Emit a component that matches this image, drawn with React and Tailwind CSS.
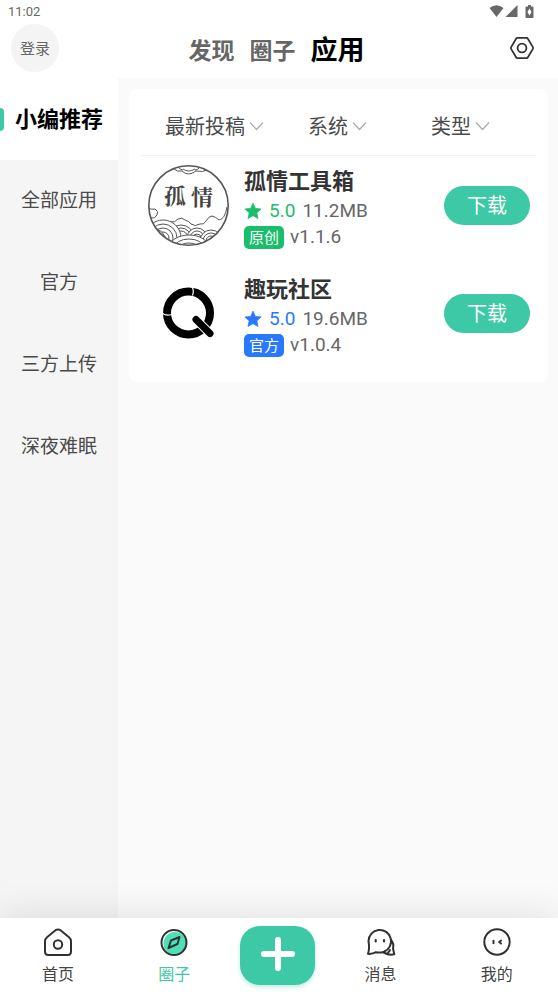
import React from "react";

const categories = ["小编推荐", "全部应用", "官方", "三方上传", "深夜难眠"];

const filters = [
  { label: "最新投稿", options: ["最新投稿", "最多下载"] },
  { label: "系统", options: ["系统", "安卓"] },
  { label: "类型", options: ["类型", "工具"] },
];

function StatusBar() {
  return (
    <div className="flex h-6 items-center justify-between pr-6 pl-2 text-[#686868]">
      <span className="font-['Roboto',sans-serif] text-[13px] leading-5">11:02</span>
      <div className="flex items-center gap-px pb-0.5" aria-hidden="true">
        <svg width="15" height="12" viewBox="0 0 15 12" fill="currentColor">
          <path d="M0.500 3Q7.500 -2.500 14.500 3L7.500 12Z" />
        </svg>
        <svg width="13" height="12" viewBox="0 0 13 12" fill="currentColor">
          <path d="M12.500 0V12H0.500Z" />
        </svg>
        <svg className="ml-1.5" width="9" height="13" viewBox="0 0 9 13">
          <path fill="currentColor" d="M3 0h3v1.500h1.500q1 0 1 1V12q0 1-1 1h-6q-1 0-1-1V2.500q0-1 1-1H3Z" />
          <path fill="#fff" d="M4.500 3.500L6.500 7 4.500 10.500 2.500 7Z" />
        </svg>
      </div>
    </div>
  );
}

function Header() {
  return (
    <header className="grid h-[54px] grid-cols-[1fr_auto_1fr] items-start pr-4 pl-[11px]">
      <button className="size-12 rounded-full bg-[#f4f4f4] text-[15px] leading-5 text-[#666]">登录</button>
      <nav className="flex h-[50px] items-center gap-[15px] font-bold">
        <a href="#discover" className="text-[23px] leading-8 text-[#666]">发现</a>
        <a href="#circle" className="text-[23px] leading-8 text-[#666]">圈子</a>
        <a href="#apps" aria-current="page" className="text-[27px] leading-8 text-black">应用</a>
      </nav>
      <button aria-label="设置" className="flex h-12 items-center justify-self-end px-[7px]">
        <svg width="26" height="24" viewBox="0 0 26 24" fill="none" stroke="#333" strokeWidth="1.800" strokeLinejoin="round">
          <path d="M8.600 1.900h8.800q1 0 1.500.9l5 8.300q.500.900 0 1.800l-5 8.300q-.500.900-1.500.9H8.600q-1 0-1.500-.9l-5-8.300q-.500-.900 0-1.800l5-8.300q.500-.900 1.500-.9Z" />
          <circle cx="13" cy="12" r="4.400" />
        </svg>
      </button>
    </header>
  );
}

function Sidebar() {
  return (
    <aside className="w-[118px] shrink-0 bg-[#f5f5f5]">
      {categories.map((name, i) =>
        i === 0 ? (
          <button key={name} className="flex h-[82px] w-full items-center bg-white pr-1 text-[22px] font-bold text-black">
            <span className="h-[23px] w-1 rounded-r bg-[#3dc9a5]" />
            <span className="flex-1 pb-1 text-center leading-8">{name}</span>
          </button>
        ) : (
          <button key={name} className="block h-[82px] w-full pb-1 text-center text-[19px] leading-7 text-[#4a4a4a]">
            {name}
          </button>
        )
      )}
    </aside>
  );
}

function Filter({ label, options }) {
  return (
    <div className="flex items-center justify-center gap-1">
      <select
        aria-label={label}
        defaultValue={label}
        className="field-sizing-content appearance-none bg-transparent text-[20px] leading-8 text-[#4a4a4a]"
      >
        {options.map((o) => (
          <option key={o}>{o}</option>
        ))}
      </select>
      <svg width="15" height="10" viewBox="0 0 15 10" fill="none" stroke="#aaa" strokeWidth="1.200" aria-hidden="true">
        <path d="M1 1.500L7.500 8.500 14 1.500" />
      </svg>
    </div>
  );
}

function LandscapeLogo() {
  return (
    <svg className="size-[81px]" viewBox="0 0 81 81" fill="none" stroke="#555" strokeWidth="1">
      <defs>
        <clipPath id="disc">
          <circle cx="40.500" cy="40.500" r="39.500" />
        </clipPath>
      </defs>
      <g clipPath="url(#disc)">
        <path d="M26 4q3 3 8 2 6 6 14 0 7 2 12-2M30 2q3 3 5 3M35 4q5 4 12 0M52 2q-2 3-5 3" />
        <path d="M0 43q4 2 7 1 4 2 2 6-2 4-6 3" />
        <path d="M22 57q5 1 8-3 4-2 7 1 4 1 6 4 4 3 9 0 4 1 6-3 3-5 6-5 4 1 7 4 6-1 8-13" />
        <g fill="#fff">
          {[13, 10, 7].map((r) => <circle key={r} cx="33" cy="73" r={r} />)}
          {[18, 14, 10, 6].map((r) => <circle key={r} cx="15" cy="73" r={r} />)}
          {[10, 7, 4].map((r) => <circle key={r} cx="49" cy="73" r={r} />)}
          {[11, 8, 5, 2].map((r) => <circle key={r} cx="63" cy="76" r={r} />)}
          {[14, 10, 6].map((r) => <circle key={r} cx="4" cy="77" r={r} />)}
          <ellipse cx="41" cy="83" rx="20" ry="13" />
          <ellipse cx="41" cy="83" rx="15" ry="9" />
          <ellipse cx="41" cy="83" rx="10" ry="5" />
        </g>
      </g>
      <circle cx="40.500" cy="40.500" r="39.700" strokeWidth="1.600" />
      <g fill="#444" stroke="none" fontSize="22" fontWeight="700" fontFamily="'Noto Serif CJK SC', 'Noto Sans CJK SC', sans-serif">
        <text x="16" y="39">孤</text>
        <text x="43" y="40">情</text>
      </g>
    </svg>
  );
}

function QLogo() {
  return (
    <svg className="size-[81px]" viewBox="0 0 81 81" fill="none" aria-hidden="true">
      <circle cx="40.500" cy="40" r="21.500" stroke="#000" strokeWidth="8" />
      <path d="M43.500 13.500q3 3 1 9M14 39.500q3 4 10 2" stroke="#fff" strokeWidth="1.200" />
      <path d="M48 46.500L62 60.500" stroke="#fff" strokeWidth="9" strokeLinecap="round" />
      <path d="M48 46.500L62 60.500" stroke="#000" strokeWidth="7" strokeLinecap="round" />
    </svg>
  );
}

function AppRow({ logo, name, size, version, badge, tone, badgeTone }) {
  return (
    <li className="flex h-[108px] items-start gap-[15px] pt-[9px] pr-1.5 pl-[7px]">
      {logo}
      <div className="min-w-0 flex-1">
        <h2 className="mb-1 text-[22px] leading-7 font-bold text-[#333]">{name}</h2>
        <p className="flex h-7 items-center gap-[7px] font-['Roboto',sans-serif] text-[19px] text-[#666]">
          <svg className={tone} width="18" height="18" viewBox="0 0 24 24" fill="currentColor" stroke="currentColor" strokeWidth="1" strokeLinejoin="round" aria-hidden="true">
            <path d="M12 1.500l3.200 7 7.600.8-5.700 5.100 1.600 7.600L12 18.200 5.300 22l1.600-7.600L1.200 9.300l7.600-.8z" />
          </svg>
          <span className={tone}>5.0</span>
          <span>{size}</span>
        </p>
        <p className="flex h-6 items-center gap-1.5 font-['Roboto',sans-serif] text-[19px] text-[#666]">
          <span className={`h-[23px] rounded-[5px] px-[5px] font-['Noto_Sans_CJK_SC',sans-serif] text-[15px] leading-[22px] text-white ${badgeTone}`}>
            {badge}
          </span>
          <span>{version}</span>
        </p>
      </div>
      <div className="flex h-[81px] items-center">
        <button className="h-[39px] w-[86px] rounded-full bg-[#3dc9a5] pb-0.5 text-[20px] leading-8 text-white">下载</button>
      </div>
    </li>
  );
}

function TabItem({ label, active, children }) {
  return (
    <a href="#tab" aria-current={active ? "page" : undefined} className={`flex flex-1 flex-col items-center pt-2.5 ${active ? "text-[#3dc9a5]" : "text-[#444]"}`}>
      <svg width="30" height="30" viewBox="0 0 30 30" fill="none" stroke="#303133" strokeWidth="2" strokeLinejoin="round" strokeLinecap="round" aria-hidden="true">
        {children}
      </svg>
      <span className="mt-[3px] text-[16px] leading-6">{label}</span>
    </a>
  );
}

function TabBar() {
  return (
    <nav className="relative flex h-[74px] bg-white pr-[3px] shadow-[0_0_40px_rgba(0,0,0,0.12)]">
      <TabItem label="首页">
        <path d="M12.500 2.200Q15 .800 17.500 2.200L26 9.200Q28 11 28 13V23.500Q28 27 24.500 27H5.500Q2 27 2 23.500V13Q2 11 4 9.200Z" />
        <circle cx="15" cy="16.500" r="4.200" />
      </TabItem>
      <TabItem label="圈子" active>
        <circle cx="16" cy="15.500" r="11.500" fill="#4fdfb4" stroke="none" />
        <circle cx="15" cy="14.500" r="12.500" />
        <path d="M20.500 9L18.500 16 9.500 20 12 12.500Z" />
      </TabItem>
      <div className="flex w-[90px] items-start justify-center pt-2">
        <button aria-label="发布" className="flex h-[59px] w-[75px] items-center justify-center rounded-[20px] bg-[#3dc9a5] pb-[3px] shadow-[0_2px_4px_rgba(61,201,165,0.35)]">
          <svg width="36" height="36" viewBox="0 0 36 36" stroke="#fff" strokeWidth="6" strokeLinecap="round">
            <path d="M18 4V32M4 18H32" />
          </svg>
        </button>
      </div>
      <TabItem label="消息">
        <path d="M25 12Q28.300 15.500 27 20.500L28.300 26.300Q23 27.500 17.500 24.500Z" />
        <path d="M2.500 13A11.300 11.300 0 1 1 18 23.700Q13.500 25.200 10 24.200Q6 26.300 2 25.800Q3.800 20.500 2.500 13Z" fill="#fff" />
        <path d="M22 24.500Q23.500 23.500 24 22" />
        <path d="M9.700 12V13.500M18 12V13.500" strokeWidth="2.200" />
      </TabItem>
      <TabItem label="我的">
        <circle cx="15" cy="14" r="12.700" />
        <path d="M11.500 12.700V15.300" />
        <path d="M19 12.500L17.200 14 19 15.500" />
      </TabItem>
    </nav>
  );
}

export default function App() {
  return (
    <div className="flex min-h-screen flex-col bg-white font-['Noto_Sans_CJK_SC',sans-serif]">
      <StatusBar />
      <Header />
      <div className="flex flex-1">
        <Sidebar />
        <main className="min-w-0 flex-1 bg-[#fafafa] pt-[11px] pr-2.5 pl-[11px]">
          <section className="rounded-lg bg-white px-3 pb-[10px]">
            <div className="grid h-[67px] grid-cols-3 border-b border-[#f3f3f3] pt-2 pr-3.5 pl-3">
              {filters.map((f) => (
                <Filter key={f.label} {...f} />
              ))}
            </div>
            <ul>
              <AppRow logo={<LandscapeLogo />} name="孤情工具箱" size="11.2MB" version="v1.1.6" badge="原创" tone="text-[#19be6b]" badgeTone="bg-[#19be6b]" />
              <AppRow logo={<QLogo />} name="趣玩社区" size="19.6MB" version="v1.0.4" badge="官方" tone="text-[#2979ff]" badgeTone="bg-[#2979ff]" />
            </ul>
          </section>
        </main>
      </div>
      <TabBar />
    </div>
  );
}
